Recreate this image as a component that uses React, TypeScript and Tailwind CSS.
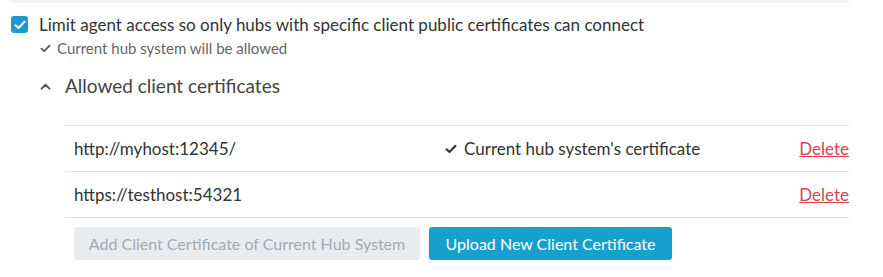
import React from "react";

const font = { fontFamily: "Lato, 'Noto Sans', sans-serif" };

function Check({ className }: { className?: string }) {
  return (
    <svg viewBox="0 0 12 10" className={className} fill="none" stroke="currentColor" strokeWidth="2" strokeLinecap="round" strokeLinejoin="round">
      <path d="M1.5 5.2 L4.5 8 L10.5 1.8" />
    </svg>
  );
}

export default function App() {
  return (
    <div className="w-[883px] h-[277px] bg-white text-[#333] relative overflow-hidden" style={font}>
      <div className="ml-[11px] w-[838px] h-[3px] bg-[#f3f3f3]" />
      <div className="flex items-start mt-[13px] ml-[11px]">
        <div className="w-[17px] h-[17px] rounded-[3px] bg-[#1a9bd0] flex items-center justify-center">
          <Check className="w-[12px] h-[10px] text-white" />
        </div>
        <div className="ml-[11px] -mt-[2px]">
          <div className="text-[17px] leading-[22px] text-[#333]">
            Limit agent access so only hubs with specific client public certificates can connect
          </div>
          <div className="flex items-center mt-[3px] text-[15px] leading-[19px] text-[#666]">
            <Check className="w-[11px] h-[9px] ml-[1px] text-[#555]" />
            <span className="ml-[6px]">Current hub system will be allowed</span>
          </div>
        </div>
      </div>
      <div className="flex items-center ml-[40px] mt-[16px] h-[24px]">
        <svg viewBox="0 0 12 8" className="w-[11px] h-[7px] text-[#555]" fill="none" stroke="currentColor" strokeWidth="2.2" strokeLinecap="round" strokeLinejoin="round">
          <path d="M1.5 6.5 L6 2 L10.5 6.5" />
        </svg>
        <span className="ml-[14px] text-[19px] leading-[24px] text-[#444]">Allowed client certificates</span>
      </div>
      <div className="ml-[65px] w-[784px] mt-[27px] border-t border-[#dee2e6]">
        <div className="flex items-center h-[46px] border-b border-[#dee2e6] pl-[9px] text-[17px]">
          <span className="w-[371px]">http://myhost:12345/</span>
          <Check className="w-[12px] h-[10px] text-[#333]" />
          <span className="ml-[7px]">Current hub system's certificate</span>
          <a className="ml-auto text-[#e0404f] underline">Delete</a>
        </div>
        <div className="flex items-center h-[46px] border-b border-[#dee2e6] pl-[9px] text-[17px]">
          <span>https://testhost:54321</span>
          <a className="ml-auto text-[#e0404f] underline">Delete</a>
        </div>
        <div className="flex items-center gap-[9px] pl-[9px] mt-[9px]">
          <button className="h-[33px] w-[346px] rounded-[3px] bg-[#e9ecef] text-[#a3abb5] text-[16px]">
            Add Client Certificate of Current Hub System
          </button>
          <button className="h-[33px] w-[243px] rounded-[3px] bg-[#17a0cf] text-white text-[16px]">
            Upload New Client Certificate
          </button>
        </div>
      </div>
    </div>
  );
}
